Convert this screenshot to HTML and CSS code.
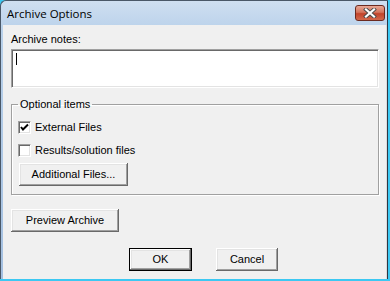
FILE: index.html
```html
<!DOCTYPE html>
<html lang="en">

<head>
    <meta charset="UTF-8">
    <title>Archive Options</title>
    <link rel="stylesheet" href="styles.css">
</head>

<body>

    <div class="window">
        <div class="titlebar">
            <span class="title">Archive Options</span>
            <div class="close-btn">
                <svg width="14" height="10" viewBox="0 0 14 10">
                    <path d="M3 1.5 L11 8.5 M11 1.5 L3 8.5" stroke="#4a4a4a" stroke-width="4" stroke-linecap="square" fill="none" />
                    <path d="M3 1.5 L11 8.5 M11 1.5 L3 8.5" stroke="#fff" stroke-width="2.2" stroke-linecap="square" fill="none" />
                </svg>
            </div>
        </div>

        <div class="client">
            <div class="field-label">Archive notes:</div>
            <div class="notes"><span class="caret"></span></div>

            <fieldset class="group">
                <legend>Optional items</legend>
                <div class="check-row">
                    <span class="checkbox">
                        <svg width="9" height="9" viewBox="0 0 9 9">
                            <path d="M1 4 L3 6.5 L8 1.5" stroke="#000" stroke-width="2" fill="none" />
                        </svg>
                    </span>
                    External Files
                </div>
                <div class="check-row">
                    <span class="checkbox"></span>
                    Results/solution files
                </div>
                <div class="btn btn-additional">Additional Files...</div>
            </fieldset>

            <div class="btn btn-preview">Preview Archive</div>

            <div class="actions">
                <div class="btn btn-default">OK</div>
                <div class="btn btn-cancel">Cancel</div>
            </div>
        </div>
    </div>

</body>

</html>
```

FILE: styles.css
```css
body {
    margin: 0;
    background-color: #3cc8f2;
    font-family: 'Liberation Sans', Arial, sans-serif;
    font-size: 11px;
    color: #000;
}

.window {
    width: 388px;
    height: 279px;
    box-sizing: border-box;
    display: flex;
    flex-direction: column;
    background: linear-gradient(#cfdff1, #b9d1ea 30px, #a3bfe0);
    border-top: 1px solid #4a5868;
    border-left: 1px solid #4a5868;
    border-right: 1px solid #2b3644;
    border-top-left-radius: 6px;
}

/* Title bar */
.titlebar {
    height: 24px;
    display: flex;
    align-items: flex-start;
    justify-content: space-between;
    padding: 0 2px 0 6px;
}

.title {
    font-family: 'Open Sans', 'Noto Sans', sans-serif;
    font-size: 11.5px;
    line-height: 15px;
    margin-top: 5px;
}

.close-btn {
    width: 30px;
    height: 16px;
    margin-top: 4px;
    box-sizing: border-box;
    border: 1px solid #6b2a20;
    border-radius: 3px;
    background: linear-gradient(#e8a896, #d3735c 45%, #c2432a 55%, #d2684c);
    display: flex;
    align-items: center;
    justify-content: center;
}

/* Client area */
.client {
    flex: 1;
    margin-left: 2px;
    background-color: #f0f0f0;
    border-right: 1px solid #dcdcdc;
    padding: 8px 7px 0 8px;
    display: flex;
    flex-direction: column;
}

.field-label {
    line-height: 13px;
    margin-bottom: 3px;
}

.notes {
    height: 39px;
    box-sizing: border-box;
    background-color: #fff;
    border-top: 1px solid #a0a0a0;
    border-left: 1px solid #a0a0a0;
    border-right: 1px solid #fff;
    border-bottom: 1px solid #fff;
    box-shadow: inset 1px 1px 0 #696969, inset -1px -1px 0 #e3e3e3;
    padding: 3px 0 0 4px;
}

.caret {
    display: block;
    width: 1px;
    height: 12px;
    background-color: #000;
}

/* Group box */
.group {
    margin: 10px 0 0;
    padding: 10px 6px 8px;
    border: 1px solid #a0a0a0;
    box-shadow: 1px 1px 0 #fff, inset 1px 1px 0 #fff;
    min-width: 0;
}

.group legend {
    padding: 0 2px;
    line-height: 13px;
}

.check-row {
    display: flex;
    align-items: center;
    height: 13px;
    line-height: 13px;
    margin-bottom: 10px;
}

.checkbox {
    width: 13px;
    height: 13px;
    box-sizing: border-box;
    margin-right: 4px;
    background-color: #fff;
    border-top: 1px solid #a0a0a0;
    border-left: 1px solid #a0a0a0;
    border-right: 1px solid #fff;
    border-bottom: 1px solid #fff;
    box-shadow: inset 1px 1px 0 #696969, inset -1px -1px 0 #e3e3e3;
    display: flex;
    align-items: center;
    justify-content: center;
}

.check-row + .check-row {
    margin-bottom: 6px;
}

/* Buttons */
.btn {
    height: 23px;
    box-sizing: border-box;
    background-color: #f0f0f0;
    box-shadow: inset -1px -1px 0 #696969, inset 1px 1px 0 #fff, inset -2px -2px 0 #a0a0a0, inset 2px 2px 0 #e3e3e3;
    display: flex;
    align-items: center;
    justify-content: center;
    line-height: 13px;
}

.btn-additional {
    width: 109px;
    margin-left: 1px;
}

.btn-preview {
    width: 108px;
    margin-top: 14px;
}

.actions {
    display: flex;
    gap: 24px;
    padding-left: 118px;
    margin-top: 16px;
}

.btn-default {
    width: 63px;
    border: 1px solid #000;
}

.btn-cancel {
    width: 62px;
}
```
